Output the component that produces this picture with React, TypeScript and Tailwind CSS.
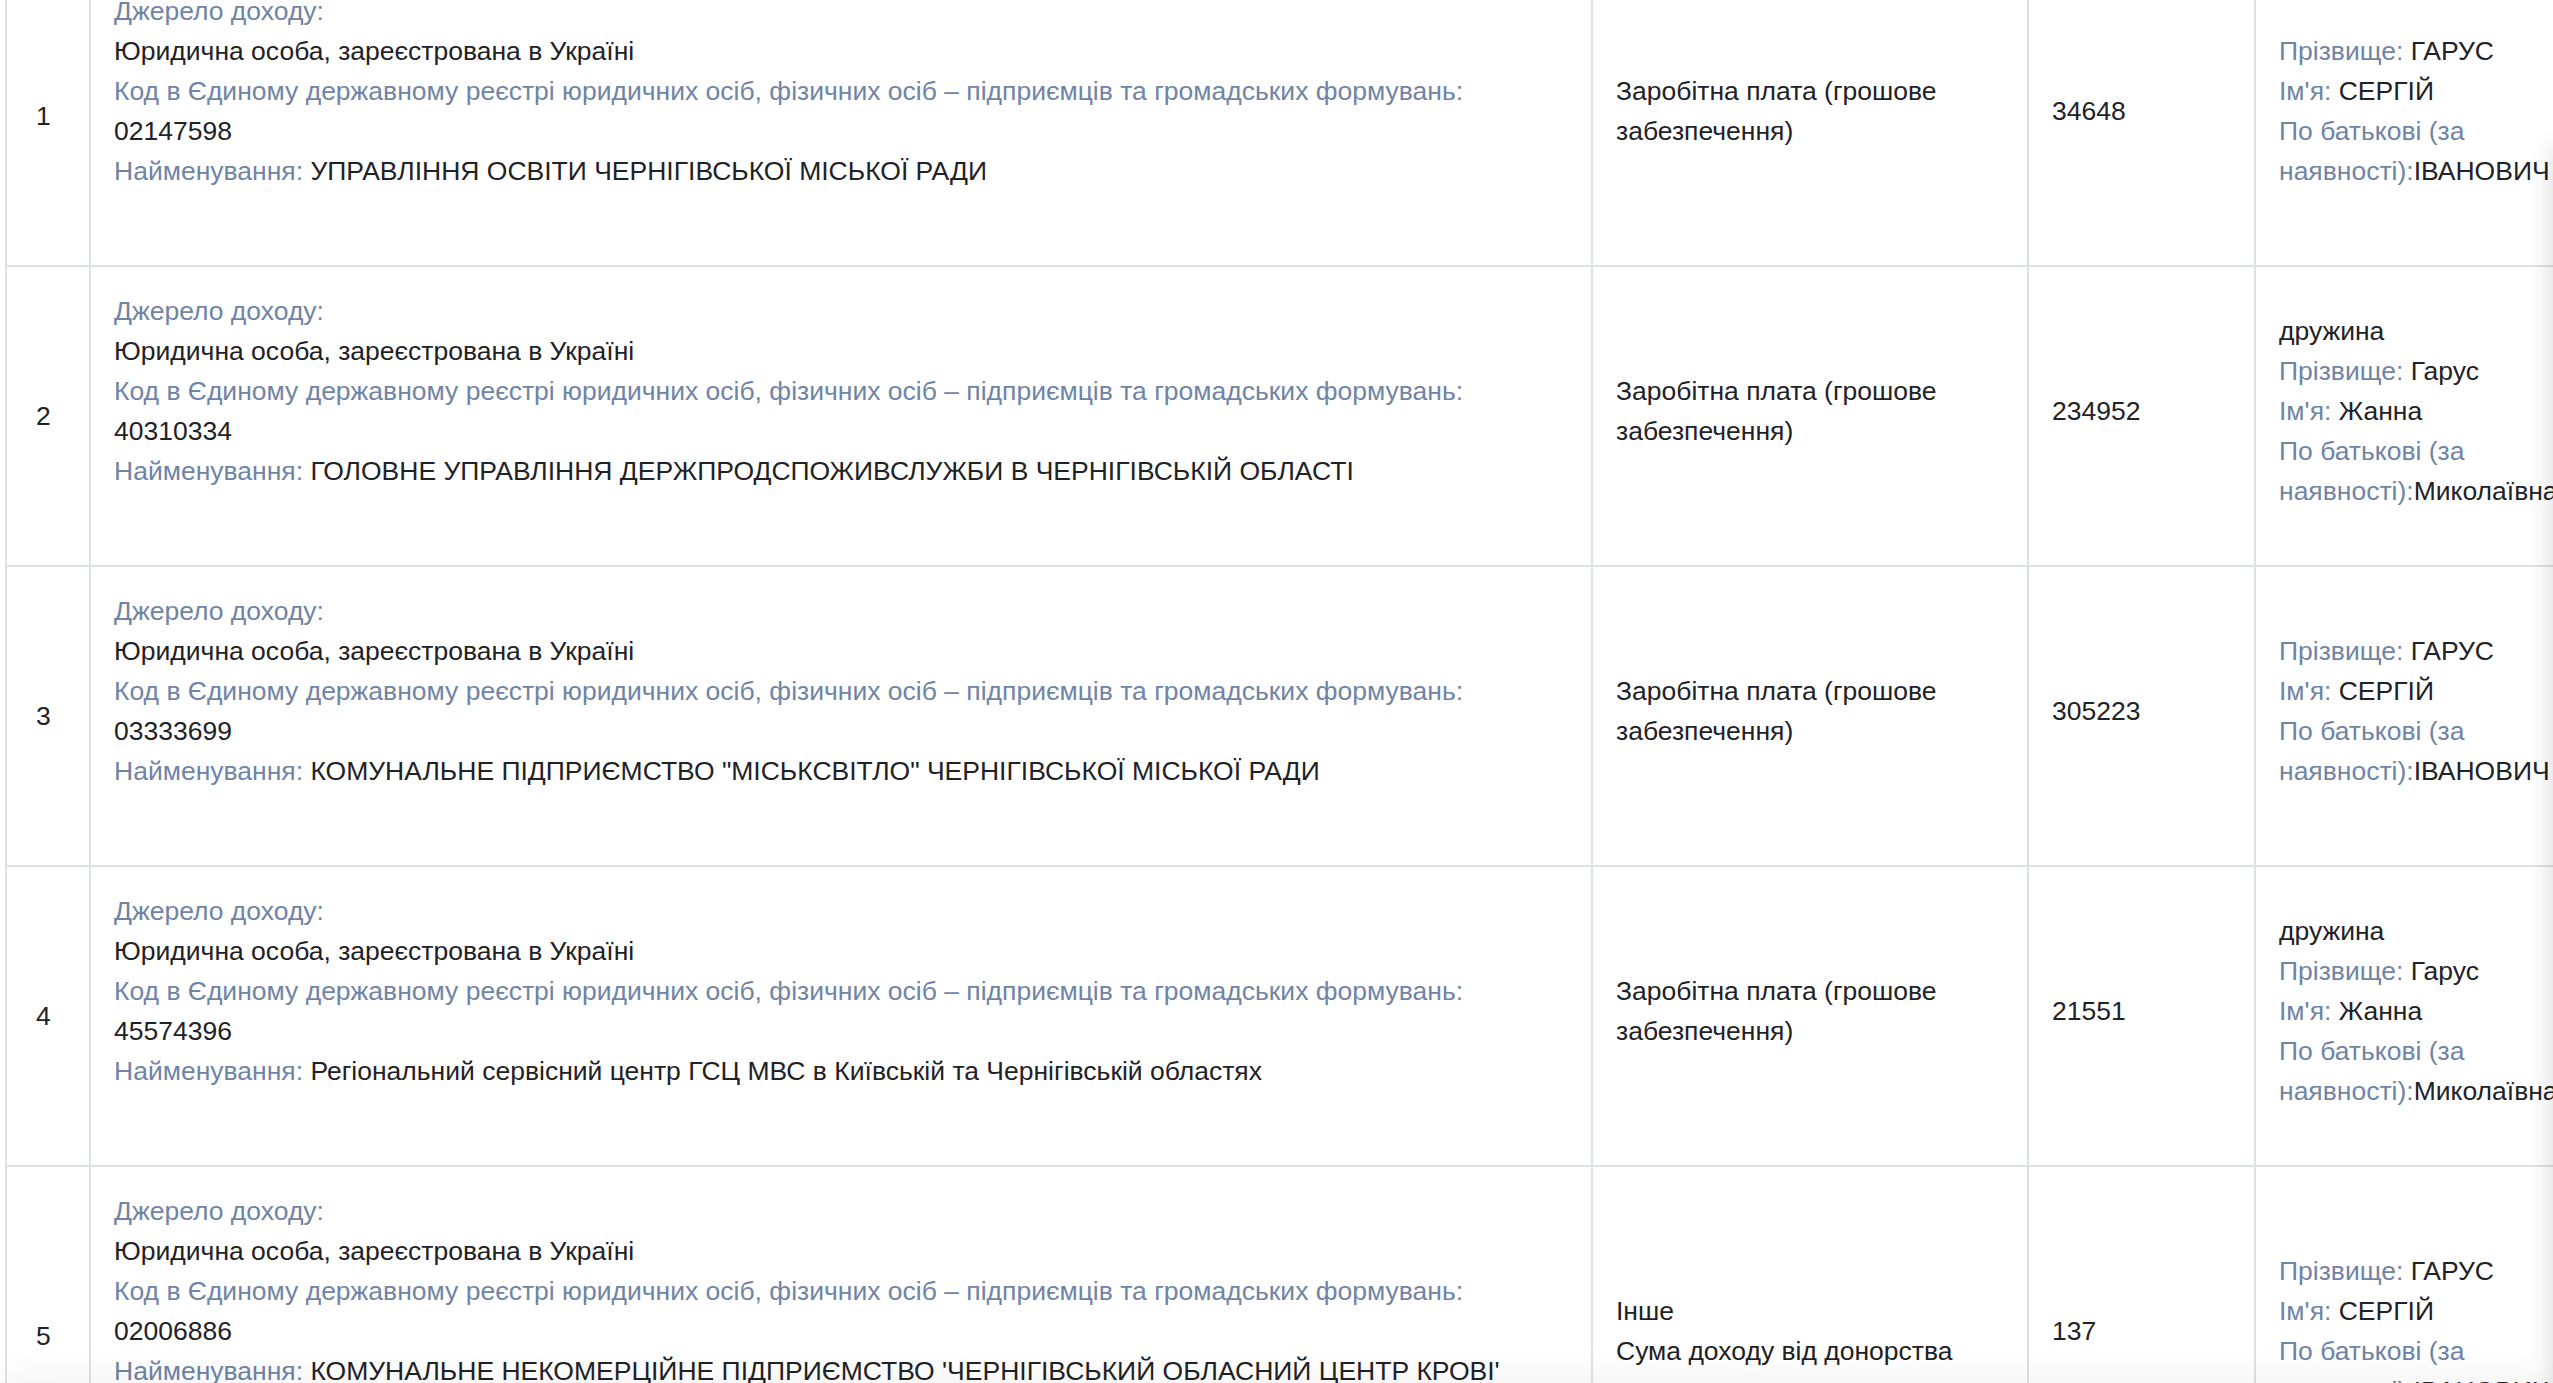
import React from 'react';

type Person = {
  relation?: string;
  last: string;
  first: string;
  middle: string;
};

type IncomeRow = {
  n: number;
  code: string;
  name: string;
  kind: string[];
  amount: string;
  person: Person;
  tall?: boolean;
};

const declarant: Person = { last: 'ГАРУС', first: 'СЕРГІЙ', middle: 'ІВАНОВИЧ' };
const wife: Person = { relation: 'дружина', last: 'Гарус', first: 'Жанна', middle: 'Миколаївна' };
const salary = ['Заробітна плата (грошове забезпечення)'];

const rows: IncomeRow[] = [
  { n: 1, code: '02147598', name: 'УПРАВЛІННЯ ОСВІТИ ЧЕРНІГІВСЬКОЇ МІСЬКОЇ РАДИ', kind: salary, amount: '34648', person: declarant },
  { n: 2, code: '40310334', name: 'ГОЛОВНЕ УПРАВЛІННЯ ДЕРЖПРОДСПОЖИВСЛУЖБИ В ЧЕРНІГІВСЬКІЙ ОБЛАСТІ', kind: salary, amount: '234952', person: wife },
  { n: 3, code: '03333699', name: 'КОМУНАЛЬНЕ ПІДПРИЄМСТВО "МІСЬКСВІТЛО" ЧЕРНІГІВСЬКОЇ МІСЬКОЇ РАДИ', kind: salary, amount: '305223', person: declarant },
  { n: 4, code: '45574396', name: 'Регіональний сервісний центр ГСЦ МВС в Київській та Чернігівській областях', kind: salary, amount: '21551', person: wife },
  {
    n: 5,
    code: '02006886',
    name: "КОМУНАЛЬНЕ НЕКОМЕРЦІЙНЕ ПІДПРИЄМСТВО 'ЧЕРНІГІВСЬКИЙ ОБЛАСНИЙ ЦЕНТР КРОВІ'",
    kind: ['Інше', 'Сума доходу від донорства'],
    amount: '137',
    person: declarant,
    tall: true,
  },
];

const cell = 'border-b-2 border-r-2 border-[#dee2e6] px-[23px] py-[24px] align-middle';
const label = 'text-[#6f84a6]';

function Row({ row }: { row: IncomeRow }) {
  const p = row.person;
  return (
    <tr>
      <td className={`${cell} pl-[29px]`}>{row.n}</td>
      <td className={cell}>
        <div className={row.tall ? 'pb-[90px]' : 'pb-[50px]'}>
          <div className={label}>Джерело доходу:</div>
          <div>Юридична особа, зареєстрована в Україні</div>
          <div className={label}>
            Код в Єдиному державному реєстрі юридичних осіб, фізичних осіб – підприємців та громадських формувань:
          </div>
          <div>{row.code}</div>
          <div>
            <span className={label}>Найменування:</span> {row.name}
          </div>
        </div>
      </td>
      <td className={cell}>
        <div className="mb-[10px]">
          {row.kind.map((k) => (
            <div key={k}>{k}</div>
          ))}
        </div>
      </td>
      <td className={cell}>
        <div className="mb-[10px]">{row.amount}</div>
      </td>
      <td className={cell}>
        <div className="mb-[10px]">
          {p.relation && <div>{p.relation}</div>}
          <div>
            <span className={label}>Прізвище:</span> {p.last}
          </div>
          <div>
            <span className={label}>Ім'я:</span> {p.first}
          </div>
          <div>
            <span className={label}>По батькові (за наявності):</span>
            {p.middle}
          </div>
        </div>
      </td>
    </tr>
  );
}

export default function App() {
  return (
    <div className="relative h-screen w-full overflow-hidden bg-white font-['Liberation_Sans',Arial,sans-serif] text-[26.5px] leading-[40px] text-[#1f2226]">
      <table className="ml-[5px] -mt-[33px] w-[2695px] table-fixed border-separate border-spacing-0 border-l-2 border-[#dee2e6]">
        <colgroup>
          <col className="w-[84px]" />
          <col className="w-[1502px]" />
          <col className="w-[436px]" />
          <col className="w-[227px]" />
          <col className="w-[444px]" />
        </colgroup>
        <tbody>
          {rows.map((row) => (
            <Row key={row.n} row={row} />
          ))}
        </tbody>
      </table>
      <div className="pointer-events-none absolute -right-[60px] top-[150px] h-[2000px] w-[60px] bg-white shadow-[0_0_26px_rgba(0,0,0,0.16)]" />
      <div className="pointer-events-none absolute -bottom-[60px] left-0 h-[60px] w-full bg-white shadow-[0_0_46px_rgba(0,0,0,0.07)]" />
    </div>
  );
}
